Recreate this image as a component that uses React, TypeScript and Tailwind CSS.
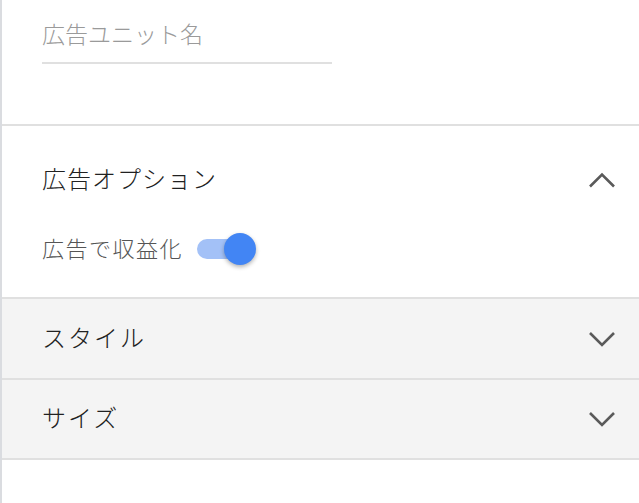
import React from "react";

function Chevron({ up }: { up?: boolean }) {
  return (
    <svg width="32" height="32" viewBox="0 0 32 32" fill="none">
      <polyline
        points={up ? "4,22.5 16,10.5 28,22.5" : "4,10 16,22 28,10"}
        stroke="#5a5a5a"
        strokeWidth="2.6"
      />
    </svg>
  );
}

export default function App() {
  return (
    <div className="min-h-[503px] w-full border-l-2 border-[#dadce0] bg-white font-['Roboto','Noto_Sans_CJK_JP',sans-serif] font-light">
      {/* ad unit name */}
      <div className="h-[124px] pl-[40px] pt-[20px]">
        <div className="w-[290px] border-b-2 border-[#e0e0e0] pb-[10px]">
          <div className="h-[32px] text-[23px] leading-[32px] text-[#9a9a9a]">広告ユニット名</div>
        </div>
      </div>

      {/* options */}
      <div className="border-t-2 border-[#e0e0e0] pb-[32px]">
        <div className="flex h-[107px] items-center justify-between pl-[40px] pr-[21px]">
          <span className="text-[24px] tracking-[1px] text-[#212121]">広告オプション</span>
          <Chevron up />
        </div>
        <div className="flex h-[32px] items-center pl-[40px]">
          <span className="text-[22px] tracking-[1.5px] text-[#555555]">広告で収益化</span>
          <div className="relative ml-[14px] h-[32px] w-[59px]">
            <div className="absolute left-0 top-[6px] h-[20px] w-[52px] rounded-full bg-[#a3c1f7]" />
            <div className="absolute right-0 top-0 h-[32px] w-[32px] rounded-full bg-[#4285f4] shadow-[0_2px_4px_rgba(0,0,0,0.3)]" />
          </div>
        </div>
      </div>

      {/* style */}
      <div className="flex h-[83px] items-center justify-between border-y-2 border-[#e0e0e0] bg-[#f4f4f4] pl-[40px] pr-[21px]">
        <span className="text-[24px] tracking-[2px] text-[#212121]">スタイル</span>
        <Chevron />
      </div>

      {/* size */}
      <div className="flex h-[80px] items-center justify-between border-b-2 border-[#e0e0e0] bg-[#f4f4f4] pl-[40px] pr-[21px]">
        <span className="text-[24px] tracking-[2px] text-[#212121]">サイズ</span>
        <Chevron />
      </div>
    </div>
  );
}
